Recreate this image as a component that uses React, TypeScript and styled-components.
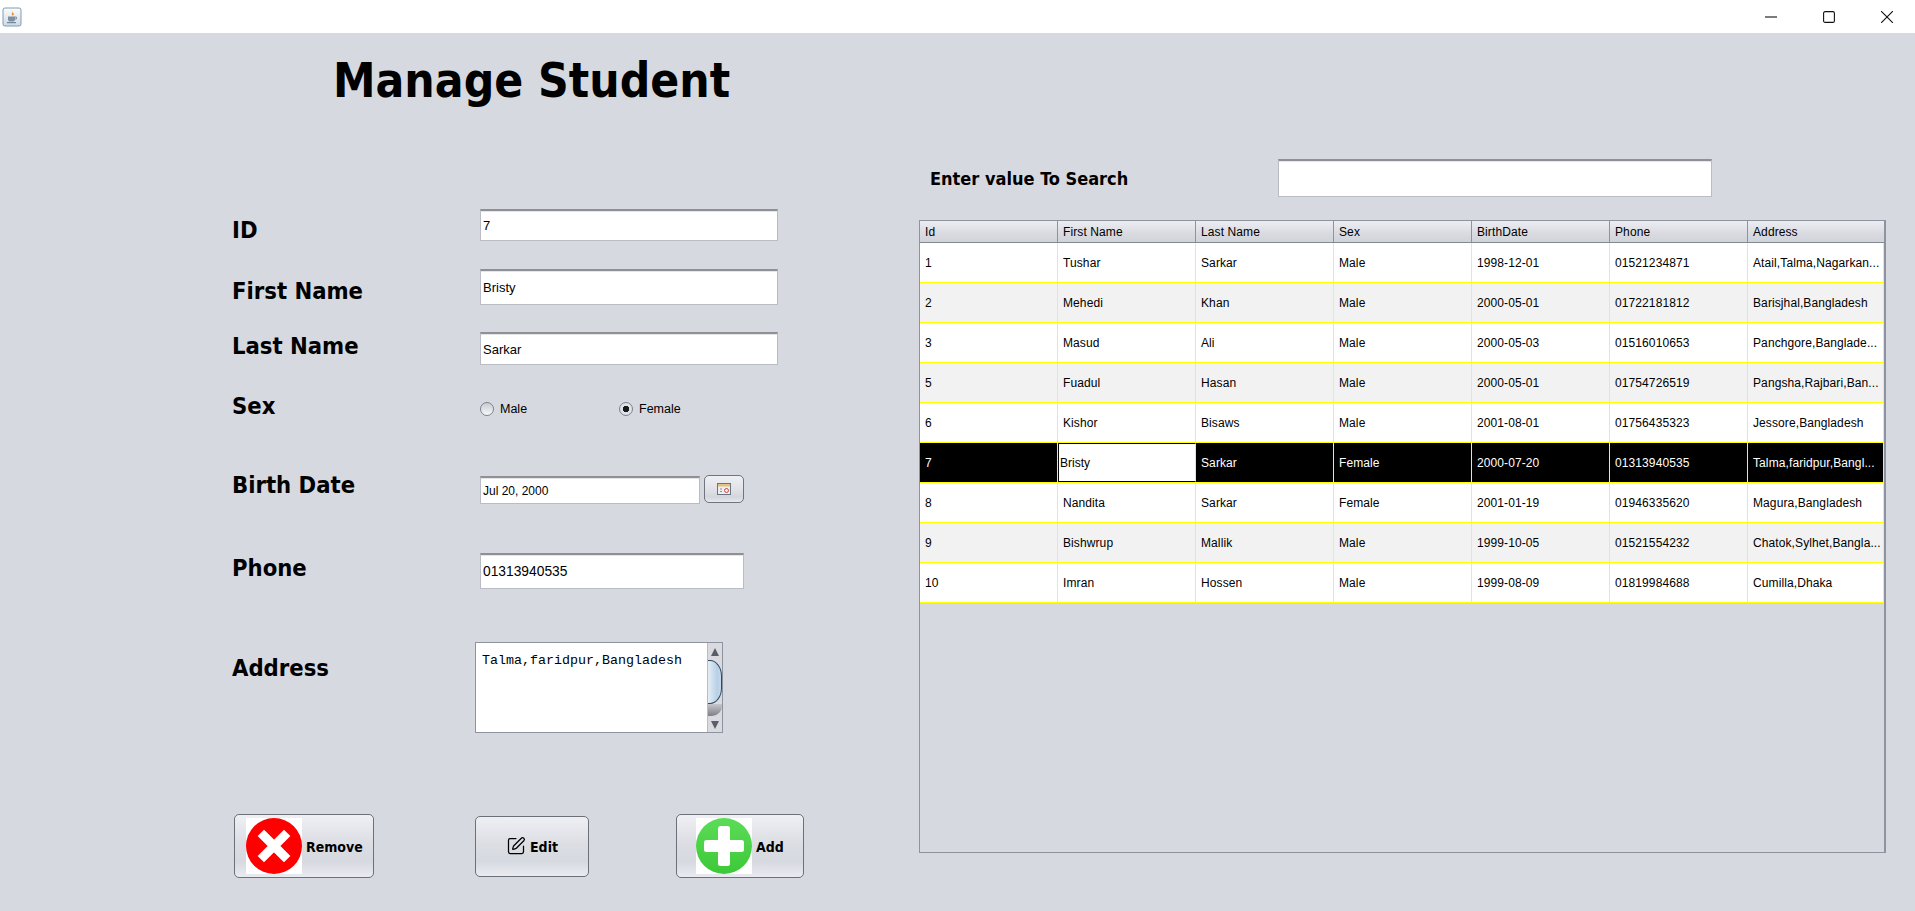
import React from "react";
import styled, { createGlobalStyle } from "styled-components";
import { SquarePen } from "lucide-react";

const Global = createGlobalStyle`
  html, body { margin: 0; padding: 0; height: 911px; overflow: hidden; background: #d6d9df; }
  * { box-sizing: border-box; }
`;

const Window = styled.div`
  width: 1915px;
  height: 911px;
  display: flex;
  flex-direction: column;
  background: #d6d9df;
  font-family: "Liberation Sans", Arial, sans-serif;
  color: #000;
`;

const TitleBar = styled.div`
  height: 33px;
  flex: none;
  background: #fff;
  display: flex;
  align-items: center;
  padding: 0 22px 0 2px;
`;

const AppIcon = styled.svg`
  width: 20px;
  height: 20px;
  display: block;
`;

const WindowControls = styled.div`
  margin-left: auto;
  display: flex;
  align-items: center;
  gap: 46px;
`;

const ControlIcon = styled.svg`
  width: 12px;
  height: 12px;
  display: block;
  stroke: #111;
  fill: none;
  stroke-width: 1.1;
`;

const Body = styled.div`
  flex: 1;
  display: flex;
  min-height: 0;
`;

const LeftPane = styled.div`
  width: 919px;
  flex: none;
  padding-left: 232px;
`;

const Heading = styled.h1`
  margin: 19px 0 0 101px;
  height: 157px;
  font-family: "DejaVu Sans Condensed", "DejaVu Sans", sans-serif;
  font-stretch: condensed;
  font-weight: 700;
  font-size: 47.5px;
  line-height: 58px;
`;

const Row = styled.div<{ $gap: number; $h: number }>`
  display: flex;
  align-items: flex-start;
  margin-top: ${(p) => p.$gap}px;
  height: ${(p) => p.$h}px;
`;

const Label = styled.div<{ $dy: number }>`
  width: 248px;
  flex: none;
  height: 30px;
  line-height: 30px;
  margin-top: ${(p) => p.$dy}px;
  font-family: "DejaVu Sans Condensed", "DejaVu Sans", sans-serif;
  font-stretch: condensed;
  font-weight: 700;
  font-size: 23.6px;
`;

const Field = styled.div<{ $w: number; $h: number; $size?: number }>`
  width: ${(p) => p.$w}px;
  height: ${(p) => p.$h}px;
  flex: none;
  background: #fff;
  border: 1px solid #b9bcc4;
  border-top: 2px solid #8e9095;
  box-shadow: inset 0 1px 0 #e6e6e6;
  padding-left: 2px;
  display: flex;
  align-items: center;
  font-size: ${(p) => p.$size ?? 13}px;
`;

const RadioGroup = styled.div`
  display: flex;
  align-items: center;
  height: 20px;
  margin-top: 1px;
`;

const RadioItem = styled.div<{ $w: number }>`
  width: ${(p) => p.$w}px;
  display: flex;
  align-items: center;
  gap: 6px;
  font-size: 12.5px;
`;

const RadioDot = styled.span<{ $on?: boolean }>`
  width: 14px;
  height: 14px;
  border-radius: 50%;
  border: 1px solid #7d828c;
  background: ${(p) =>
    p.$on
      ? "radial-gradient(circle, #1b1b1b 0 3px, #dfe2e8 3.5px)"
      : "linear-gradient(#c9ccd3, #f7f8fa)"};
  flex: none;
`;

const CalendarButton = styled.div`
  width: 40px;
  height: 28px;
  margin-left: 4px;
  margin-top: -1px;
  border: 1px solid #70747c;
  border-radius: 5px;
  background: linear-gradient(#eff0f4, #dfe1e7 55%, #d3d6dd 80%, #e6e8ed);
  display: flex;
  align-items: center;
  justify-content: center;
`;

const CalendarIcon = styled.svg`
  width: 14px;
  height: 12px;
  display: block;
`;

const AddressBox = styled.div`
  width: 248px;
  height: 91px;
  margin-left: -5px;
  display: flex;
  background: #fff;
  border: 1px solid #8f939f;
`;

const AddressText = styled.div`
  flex: 1;
  padding: 10px 0 0 6px;
  font-family: "Liberation Mono", "Courier New", monospace;
  font-size: 13.33px;
  line-height: 16px;
`;

const ScrollBar = styled.div`
  width: 15px;
  flex: none;
  border-left: 1px solid #b9bcc4;
  background: #d9dbe1;
  display: flex;
  flex-direction: column;
  align-items: center;
`;

const ScrollArrow = styled.div<{ $up?: boolean }>`
  flex: none;
  height: 17px;
  width: 100%;
  display: flex;
  align-items: center;
  justify-content: center;
  &::before {
    content: "";
    border-left: 4px solid transparent;
    border-right: 4px solid transparent;
    ${(p) => (p.$up ? "border-bottom: 8px solid #5a5e66;" : "border-top: 8px solid #5a5e66;")}
  }
`;

const ScrollThumb = styled.div`
  flex: none;
  width: 100%;
  height: 44px;
  background: linear-gradient(90deg, #e6eef6, #b7d0e6 70%, #c4d9eb);
  border: 1px solid #2f4a60;
  border-left: none;
  border-radius: 0 12px 12px 0 / 0 16px 16px 0;
`;

const ScrollShadow = styled.div`
  flex: none;
  width: 100%;
  height: 12px;
  background: linear-gradient(#c5c7cc, #7d8086);
  border-radius: 0 0 10px 0;
`;

const ScrollGap = styled.div`
  flex: 1;
`;

const ButtonRow = styled.div`
  display: flex;
  align-items: center;
  margin: 81px 0 0 2px;
  height: 64px;
`;

const ActionButton = styled.div<{ $w: number; $h: number; $ml?: number; $pl?: number; $center?: boolean }>`
  width: ${(p) => p.$w}px;
  height: ${(p) => p.$h}px;
  margin-left: ${(p) => p.$ml ?? 0}px;
  padding-left: ${(p) => p.$pl ?? 0}px;
  flex: none;
  display: flex;
  align-items: center;
  gap: 4px;
  justify-content: ${(p) => (p.$center ? "center" : "flex-start")};
  border: 1px solid #6c7078;
  border-radius: 5px;
  background: linear-gradient(#eff0f4, #dcdee4 45%, #d6d9df 75%, #e9ebf1);
  font-family: "DejaVu Sans Condensed", "DejaVu Sans", sans-serif;
  font-stretch: condensed;
  font-weight: 700;
  font-size: 14px;
`;

const ButtonText = styled.span`
  padding-top: 2px;
`;

const ImageIcon = styled.svg`
  width: 56px;
  height: 56px;
  flex: none;
  display: block;
  background: #fff;
`;

const RightPane = styled.div`
  flex: 1;
  padding-top: 126px;
`;

const SearchRow = styled.div`
  display: flex;
  align-items: center;
  height: 38px;
`;

const SearchLabel = styled.div`
  width: 359px;
  padding-left: 11px;
  flex: none;
  font-family: "DejaVu Sans Condensed", "DejaVu Sans", sans-serif;
  font-stretch: condensed;
  font-weight: 700;
  font-size: 18px;
`;

const TableFrame = styled.div`
  width: 967px;
  height: 633px;
  margin-top: 23px;
  border: 1px solid #8f939f;
  border-right-width: 2px;
`;

const Cols = styled.div`
  display: grid;
  grid-template-columns: repeat(6, 138px) 1fr;
`;

const HeaderRow = styled(Cols)`
  height: 22px;
  border-bottom: 1px solid #84888f;
  background: linear-gradient(#eceef2, #dadce2 55%, #d0d3da);
`;

const HeaderCell = styled.div`
  padding-left: 5px;
  display: flex;
  align-items: center;
  font-size: 12px;
  letter-spacing: 0.1px;
  white-space: nowrap;
  border-right: 1px solid #8f939f;
  &:last-child { border-right: none; }
`;

const DataRow = styled(Cols)<{ $alt?: boolean; $selected?: boolean }>`
  height: 40px;
  border-bottom: 1px solid #ffff00;
  background: ${(p) => (p.$selected ? "#000" : p.$alt ? "#f2f2f2" : "#fff")};
  color: ${(p) => (p.$selected ? "#fff" : "#000")};
`;

const Cell = styled.div`
  padding: 1px 0 0 5px;
  display: flex;
  align-items: center;
  font-size: 12px;
  letter-spacing: 0.1px;
  white-space: nowrap;
  overflow: hidden;
  border-right: 1px solid #ffff00;
`;

const EditingCell = styled(Cell)`
  padding: 1px 0 0 1px;
  background: #fff;
  color: #000;
  border: 1px solid #000;
  border-right: 1px solid #ffff00;
  letter-spacing: 0;
`;

const rows = [
  ["1", "Tushar", "Sarkar", "Male", "1998-12-01", "01521234871", "Atail,Talma,Nagarkan..."],
  ["2", "Mehedi", "Khan", "Male", "2000-05-01", "01722181812", "Barisjhal,Bangladesh"],
  ["3", "Masud", "Ali", "Male", "2000-05-03", "01516010653", "Panchgore,Banglade..."],
  ["5", "Fuadul", "Hasan", "Male", "2000-05-01", "01754726519", "Pangsha,Rajbari,Ban..."],
  ["6", "Kishor", "Bisaws", "Male", "2001-08-01", "01756435323", "Jessore,Bangladesh"],
  ["7", "Bristy", "Sarkar", "Female", "2000-07-20", "01313940535", "Talma,faridpur,Bangl..."],
  ["8", "Nandita", "Sarkar", "Female", "2001-01-19", "01946335620", "Magura,Bangladesh"],
  ["9", "Bishwrup", "Mallik", "Male", "1999-10-05", "01521554232", "Chatok,Sylhet,Bangla..."],
  ["10", "Imran", "Hossen", "Male", "1999-08-09", "01819984688", "Cumilla,Dhaka"],
];

const headers = ["Id", "First Name", "Last Name", "Sex", "BirthDate", "Phone", "Address"];

export default function App() {
  return (
    <Window>
      <Global />
      <TitleBar>
        <AppIcon viewBox="0 0 20 20">
          <defs>
            <linearGradient id="ja" x1="0" y1="0" x2="0" y2="1">
              <stop offset="0" stopColor="#fbfcfd" />
              <stop offset="1" stopColor="#cfd9e3" />
            </linearGradient>
          </defs>
          <rect x="1" y="1" width="18" height="18" rx="2" fill="url(#ja)" stroke="#7f9db5" />
          <path d="M10.5 3.5c1.5 1.5-1.5 2.5-.5 4.5 .6 1 1.6 .6 1.8-.4.2-1.4-1.5-2.3-1.3-4.1z" fill="#ec8a2e" />
          <path d="M6 9.5h7v3c0 1.2-1 2-2 2H8c-1 0-2-.8-2-2z" fill="#7d8fa0" />
          <path d="M13 10h1.4v2H13" fill="none" stroke="#7d8fa0" />
          <path d="M5 15.7h9" stroke="#5c7288" />
        </AppIcon>
        <WindowControls>
          <ControlIcon viewBox="0 0 12 12"><path d="M0 6h12" /></ControlIcon>
          <ControlIcon viewBox="0 0 12 12"><rect x="0.6" y="0.6" width="10.8" height="10.8" rx="1.5" /></ControlIcon>
          <ControlIcon viewBox="0 0 12 12"><path d="M0 0l12 12M12 0L0 12" /></ControlIcon>
        </WindowControls>
      </TitleBar>
      <Body>
        <LeftPane>
          <Heading>Manage Student</Heading>
          <Row $gap={0} $h={32}>
            <Label $dy={6}>ID</Label>
            <Field $w={298} $h={32}>7</Field>
          </Row>
          <Row $gap={28} $h={36}>
            <Label $dy={7}>First Name</Label>
            <Field $w={298} $h={36}>Bristy</Field>
          </Row>
          <Row $gap={27} $h={33}>
            <Label $dy={-1}>Last Name</Label>
            <Field $w={298} $h={33}>Sarkar</Field>
          </Row>
          <Row $gap={33} $h={20}>
            <Label $dy={-7}>Sex</Label>
            <RadioGroup>
              <RadioItem $w={139}><RadioDot />Male</RadioItem>
              <RadioItem $w={100}><RadioDot $on />Female</RadioItem>
            </RadioGroup>
          </Row>
          <Row $gap={58} $h={28}>
            <Label $dy={-6}>Birth Date</Label>
            <Field $w={220} $h={28} $size={12}>Jul 20, 2000</Field>
            <CalendarButton>
              <CalendarIcon viewBox="0 0 14 12">
                <rect x="0.5" y="0.5" width="13" height="11" fill="#eceef2" stroke="#6b7380" />
                <rect x="1" y="1" width="12" height="2.5" fill="#e2c27c" />
                <circle cx="9.5" cy="7.5" r="2" fill="none" stroke="#d8443c" />
                <path d="M3 6h2M3 8.5h2" stroke="#8a929e" />
              </CalendarIcon>
            </CalendarButton>
          </Row>
          <Row $gap={49} $h={36}>
            <Label $dy={0}>Phone</Label>
            <Field $w={264} $h={36} $size={13.8}>01313940535</Field>
          </Row>
          <Row $gap={53} $h={91}>
            <Label $dy={11}>Address</Label>
            <AddressBox>
              <AddressText>Talma,faridpur,Bangladesh</AddressText>
              <ScrollBar>
                <ScrollArrow $up />
                <ScrollThumb />
                <ScrollShadow />
                <ScrollGap />
                <ScrollArrow />
              </ScrollBar>
            </AddressBox>
          </Row>
          <ButtonRow>
            <ActionButton $w={140} $h={64} $pl={11}>
              <ImageIcon viewBox="0 0 56 56">
                <circle cx="28" cy="28" r="28" fill="#ff0000" />
                <path d="M18 18l20 20M38 18L18 38" stroke="#fff" strokeWidth="9" strokeLinecap="square" />
              </ImageIcon>
              <ButtonText>Remove</ButtonText>
            </ActionButton>
            <ActionButton $w={114} $h={61} $ml={101} $center>
              <SquarePen size={20} strokeWidth={1.5} />
              <ButtonText>Edit</ButtonText>
            </ActionButton>
            <ActionButton $w={128} $h={64} $ml={87} $pl={19}>
              <ImageIcon viewBox="0 0 56 56">
                <defs>
                  <linearGradient id="addGreen" x1="0" y1="0" x2="0" y2="1">
                    <stop offset="0" stopColor="#5cdc58" />
                    <stop offset="1" stopColor="#3dc838" />
                  </linearGradient>
                </defs>
                <circle cx="28" cy="28" r="28" fill="url(#addGreen)" />
                <rect x="22" y="8" width="12" height="40" rx="2.5" fill="#fff" />
                <rect x="8" y="22" width="40" height="12" rx="2.5" fill="#fff" />
              </ImageIcon>
              <ButtonText>Add</ButtonText>
            </ActionButton>
          </ButtonRow>
        </LeftPane>
        <RightPane>
          <SearchRow>
            <SearchLabel>Enter value To Search</SearchLabel>
            <Field $w={434} $h={38} />
          </SearchRow>
          <TableFrame>
            <HeaderRow>
              {headers.map((h) => <HeaderCell key={h}>{h}</HeaderCell>)}
            </HeaderRow>
            {rows.map((r, i) => (
              <DataRow key={r[0]} $alt={i % 2 === 1} $selected={r[0] === "7"}>
                {r.map((c, j) =>
                  r[0] === "7" && j === 1 ? (
                    <EditingCell key={j}>{c}</EditingCell>
                  ) : (
                    <Cell key={j}>{c}</Cell>
                  )
                )}
              </DataRow>
            ))}
          </TableFrame>
        </RightPane>
      </Body>
    </Window>
  );
}
